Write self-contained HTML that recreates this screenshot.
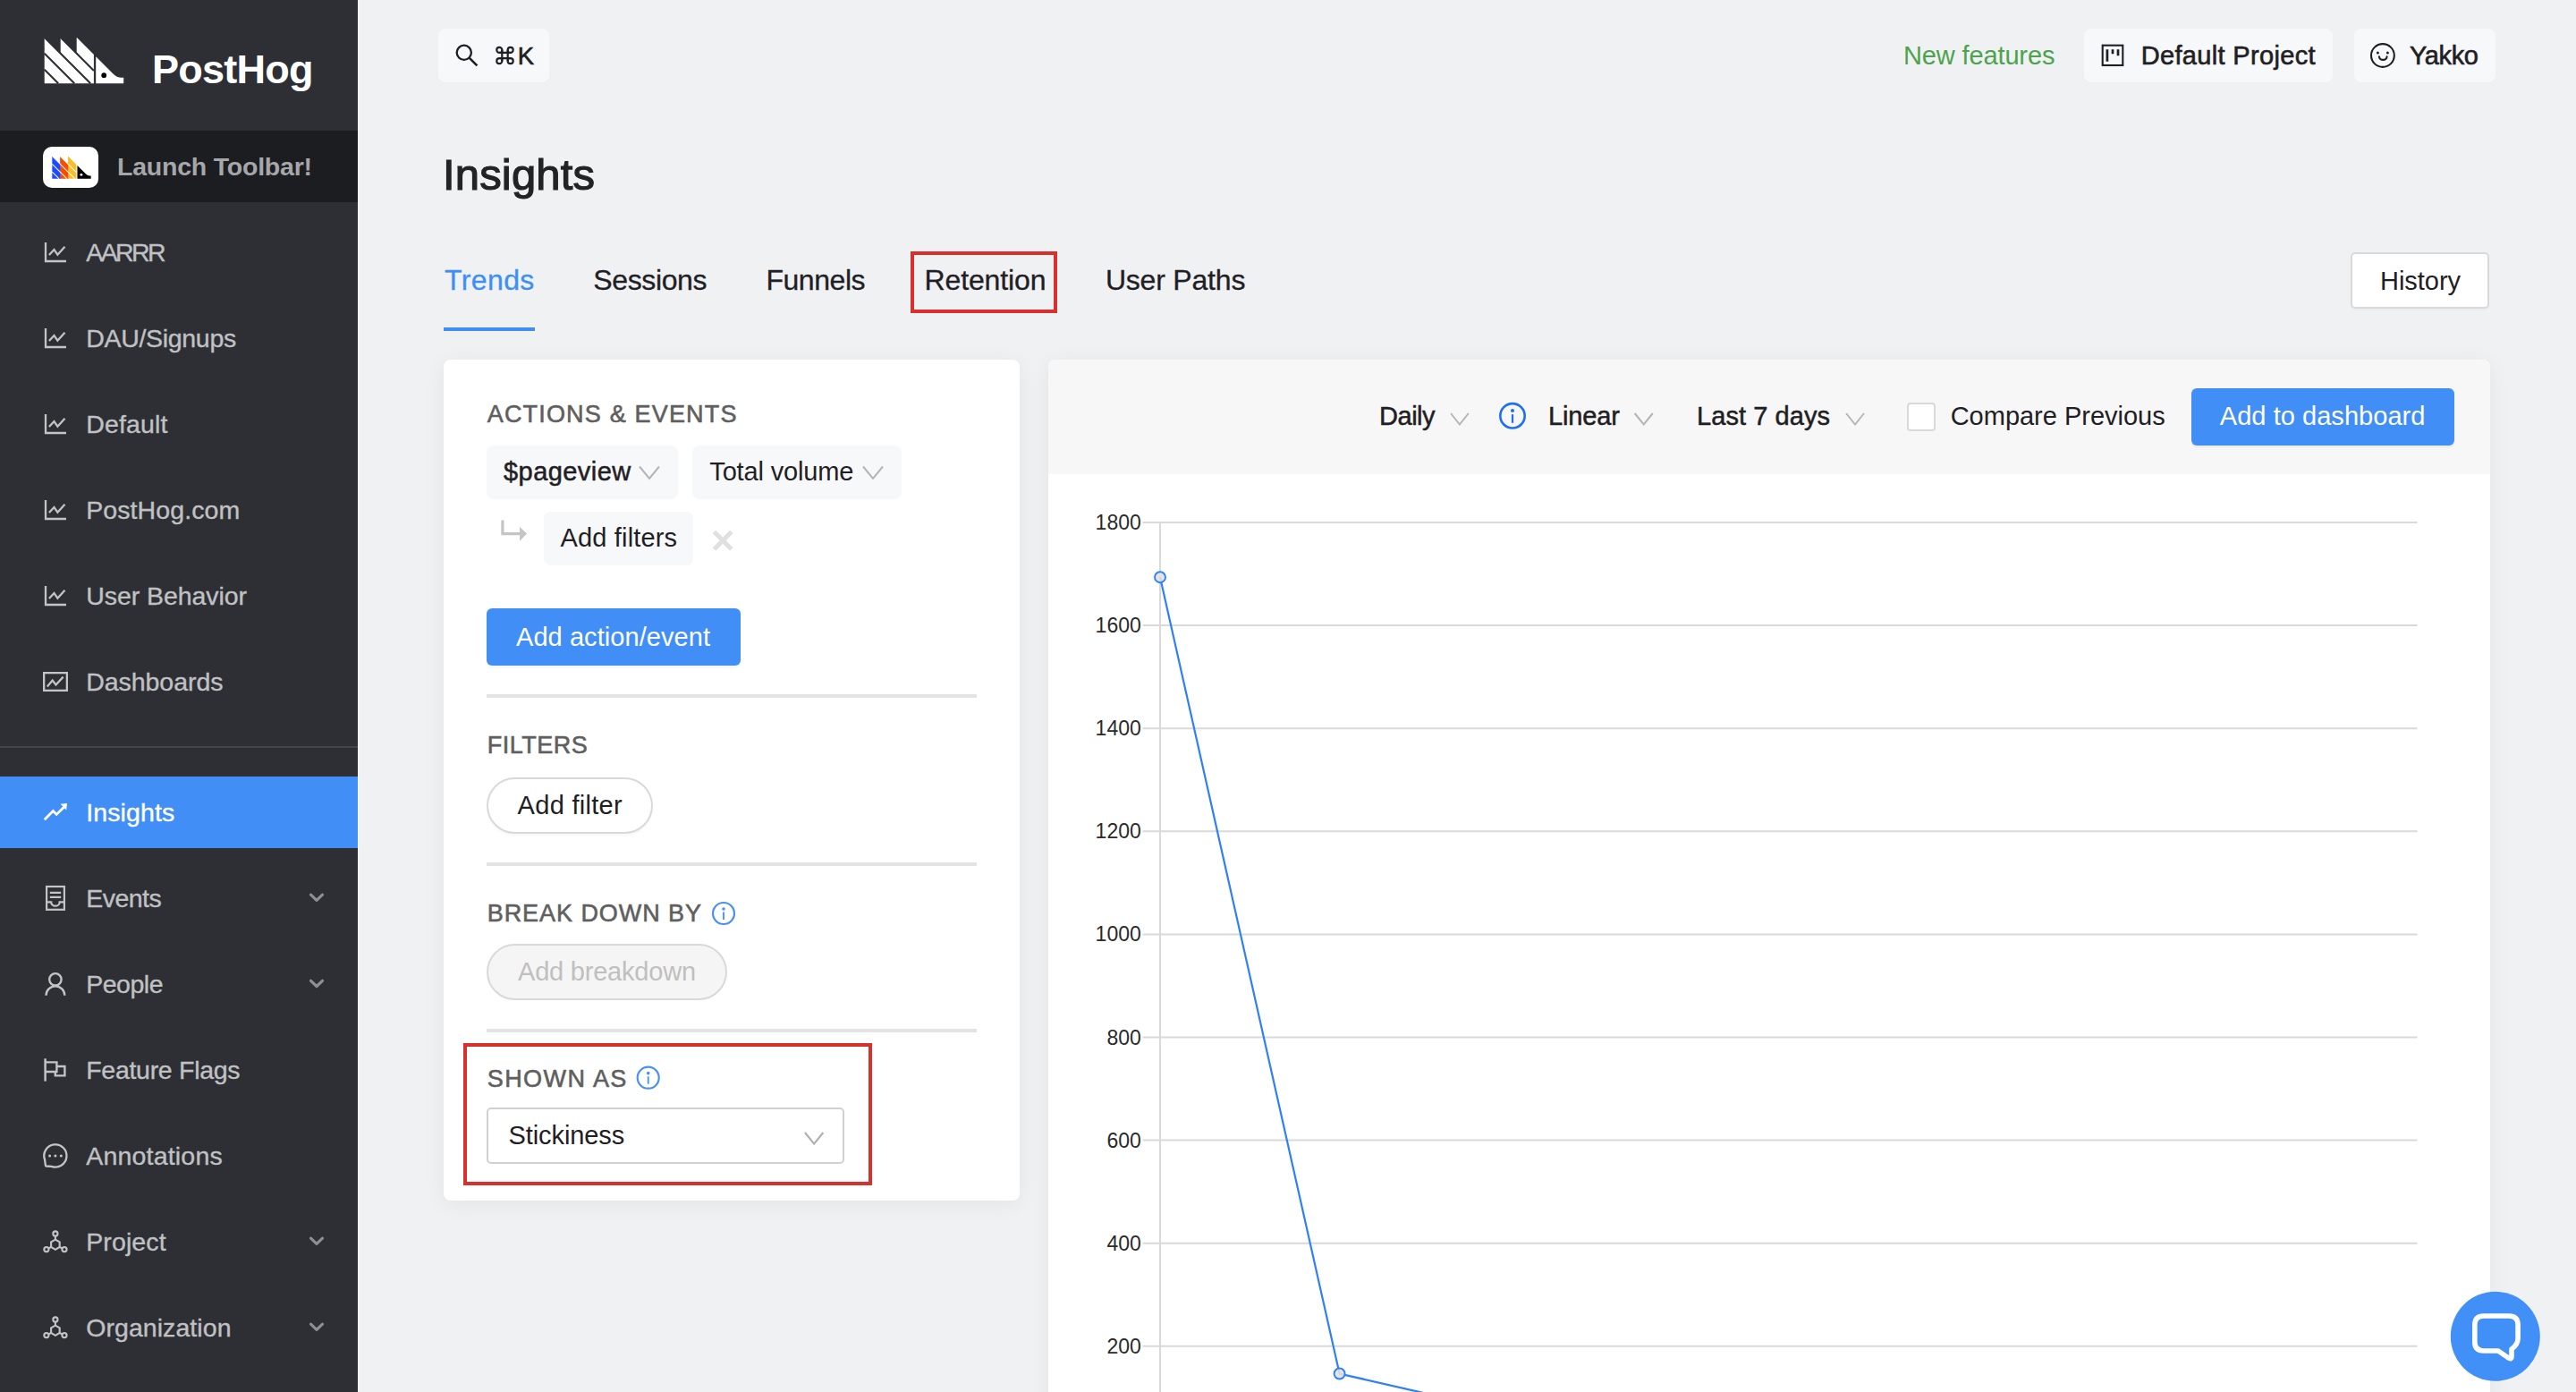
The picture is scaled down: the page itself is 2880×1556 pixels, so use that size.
<!DOCTYPE html>
<html><head><meta charset="utf-8"><style>
html,body{margin:0;padding:0;width:2880px;height:1556px;overflow:hidden;background:#f0f1f3;}
.t{position:absolute;white-space:nowrap;font-family:"Liberation Sans",sans-serif;}
svg{overflow:visible}
</style></head><body>
<div style="position:absolute;left:0.00px;top:0.00px;width:400.00px;height:1556.00px;background:#2d2f34;"></div>
<div style="position:absolute;left:400.00px;top:0.00px;width:1.00px;height:1556.00px;background:#f7f8fa;"></div>
<svg style="position:absolute;left:0px;top:0px;" width="400" height="240" viewBox="0 0 400 240"><g transform="translate(49.7,41.75) scale(1)"><polygon points="0,0 18,18 18,0 36,18 36,0 55.2,19.2 55.2,51.5 0,51.5" fill="#fff"/><line x1="0" y1="0" x2="51.5" y2="51.5" stroke="#2d2f34" stroke-width="2.1"/><line x1="18" y1="0" x2="55.2" y2="37.2" stroke="#2d2f34" stroke-width="2.1"/><line x1="0" y1="18" x2="33.5" y2="51.5" stroke="#2d2f34" stroke-width="2.1"/><line x1="0" y1="36" x2="15.5" y2="51.5" stroke="#2d2f34" stroke-width="2.1"/><line x1="0" y1="0" x2="18" y2="18" stroke="#2d2f34" stroke-width="0"/><path d="M57.5,21.5 L76.5,40.5 Q81,45 86,45 L88.5,45 L88.5,51.5 L57.5,51.5 Z" fill="#fff"/><circle cx="66.5" cy="42.4" r="2.85" fill="#000"/></g></svg>
<div class="t" style="left:170.00px;top:54.91px;font-size:45px;line-height:45px;color:#fff;font-weight:bold;letter-spacing:-0.749px;">PostHog</div>
<div style="position:absolute;left:0.00px;top:146.00px;width:400.00px;height:79.50px;background:#1c1d21;"></div>
<div style="position:absolute;left:48.00px;top:164.00px;width:62.00px;height:46.00px;background:#fff;border-radius:10px;"></div>
<svg style="position:absolute;left:0px;top:0px;" width="400" height="240" viewBox="0 0 400 240"><g transform="translate(58.3,174.5) scale(0.49)"><polygon points="36,0 55.2,19.2 55.2,51.5 36,51.5" fill="#f9bd2b"/><polygon points="18,0 36,18 36.6,18.6 36.6,51.5 18,51.5" fill="#f54e00"/><polygon points="0,0 18,18 18.6,18.6 18.6,51.5 0,51.5" fill="#1d4aff"/><line x1="0" y1="0" x2="51.5" y2="51.5" stroke="#fff" stroke-width="2.1"/><line x1="18" y1="0" x2="55.2" y2="37.2" stroke="#fff" stroke-width="2.1"/><line x1="0" y1="18" x2="33.5" y2="51.5" stroke="#fff" stroke-width="2.1"/><line x1="0" y1="36" x2="15.5" y2="51.5" stroke="#fff" stroke-width="2.1"/><line x1="0" y1="0" x2="18" y2="18" stroke="#fff" stroke-width="0"/><path d="M57.5,21.5 L76.5,40.5 Q81,45 86,45 L88.5,45 L88.5,51.5 L57.5,51.5 Z" fill="#000"/><circle cx="66.5" cy="42.4" r="2.85" fill="#fff"/></g></svg>
<div class="t" style="left:131.00px;top:172.37px;font-size:28.5px;line-height:28.5px;color:#a6a7aa;font-weight:bold;letter-spacing:-0.224px;">Launch Toolbar!</div>
<div style="position:absolute;left:0.00px;top:834.00px;width:400.00px;height:2.00px;background:#43454a;"></div>
<div style="position:absolute;left:0.00px;top:868.00px;width:400.00px;height:80.00px;background:#418ff6;"></div>
<div class="t" style="left:96.20px;top:268.07px;font-size:28.5px;line-height:28.5px;color:#c0c1c3;letter-spacing:-2.570px;-webkit-text-stroke:0.35px #c0c1c3;">AARRR</div>
<div class="t" style="left:96.20px;top:364.07px;font-size:28.5px;line-height:28.5px;color:#c0c1c3;letter-spacing:-0.309px;-webkit-text-stroke:0.35px #c0c1c3;">DAU/Signups</div>
<div class="t" style="left:96.20px;top:460.07px;font-size:28.5px;line-height:28.5px;color:#c0c1c3;letter-spacing:0.152px;-webkit-text-stroke:0.35px #c0c1c3;">Default</div>
<div class="t" style="left:96.20px;top:556.07px;font-size:28.5px;line-height:28.5px;color:#c0c1c3;letter-spacing:0.094px;-webkit-text-stroke:0.35px #c0c1c3;">PostHog.com</div>
<div class="t" style="left:96.20px;top:652.07px;font-size:28.5px;line-height:28.5px;color:#c0c1c3;letter-spacing:-0.056px;-webkit-text-stroke:0.35px #c0c1c3;">User Behavior</div>
<div class="t" style="left:96.20px;top:748.17px;font-size:28.5px;line-height:28.5px;color:#c0c1c3;letter-spacing:-0.041px;-webkit-text-stroke:0.35px #c0c1c3;">Dashboards</div>
<div class="t" style="left:96.20px;top:894.07px;font-size:28.5px;line-height:28.5px;color:#fff;letter-spacing:0.113px;-webkit-text-stroke:0.35px #fff;">Insights</div>
<div class="t" style="left:96.20px;top:989.77px;font-size:28.5px;line-height:28.5px;color:#c0c1c3;letter-spacing:-0.525px;-webkit-text-stroke:0.35px #c0c1c3;">Events</div>
<div class="t" style="left:96.20px;top:1085.87px;font-size:28.5px;line-height:28.5px;color:#c0c1c3;letter-spacing:-0.490px;-webkit-text-stroke:0.35px #c0c1c3;">People</div>
<div class="t" style="left:96.20px;top:1181.77px;font-size:28.5px;line-height:28.5px;color:#c0c1c3;letter-spacing:-0.285px;-webkit-text-stroke:0.35px #c0c1c3;">Feature Flags</div>
<div class="t" style="left:96.20px;top:1277.57px;font-size:28.5px;line-height:28.5px;color:#c0c1c3;letter-spacing:0.196px;-webkit-text-stroke:0.35px #c0c1c3;">Annotations</div>
<div class="t" style="left:96.20px;top:1373.67px;font-size:28.5px;line-height:28.5px;color:#c0c1c3;letter-spacing:0.118px;-webkit-text-stroke:0.35px #c0c1c3;">Project</div>
<div class="t" style="left:96.20px;top:1469.67px;font-size:28.5px;line-height:28.5px;color:#c0c1c3;letter-spacing:0.064px;-webkit-text-stroke:0.35px #c0c1c3;">Organization</div>
<svg style="position:absolute;left:0px;top:0px;" width="400" height="1556" viewBox="0 0 400 1556"><path d="M51,270.9 V292.0 H74" fill="none" stroke="#c3c4c6" stroke-width="2.3"/><path d="M54.9,285.0 L60.5,279.0 L64.4,284.7 L72.5,275.7" fill="none" stroke="#c3c4c6" stroke-width="2.3"/><path d="M51,366.9 V388.0 H74" fill="none" stroke="#c3c4c6" stroke-width="2.3"/><path d="M54.9,381.0 L60.5,375.0 L64.4,380.7 L72.5,371.7" fill="none" stroke="#c3c4c6" stroke-width="2.3"/><path d="M51,462.9 V484.0 H74" fill="none" stroke="#c3c4c6" stroke-width="2.3"/><path d="M54.9,477.0 L60.5,471.0 L64.4,476.7 L72.5,467.7" fill="none" stroke="#c3c4c6" stroke-width="2.3"/><path d="M51,558.9000000000001 V580.0 H74" fill="none" stroke="#c3c4c6" stroke-width="2.3"/><path d="M54.9,573.0 L60.5,567.0 L64.4,572.7 L72.5,563.7" fill="none" stroke="#c3c4c6" stroke-width="2.3"/><path d="M51,654.9000000000001 V676.0 H74" fill="none" stroke="#c3c4c6" stroke-width="2.3"/><path d="M54.9,669.0 L60.5,663.0 L64.4,668.7 L72.5,659.7" fill="none" stroke="#c3c4c6" stroke-width="2.3"/><rect x="49.15" y="752.15" width="25.7" height="19.7" fill="none" stroke="#c3c4c6" stroke-width="2.3"/><path d="M52.75,767.5 L58.7,760.6 L62.5,765.5 L70.7,756.6" fill="none" stroke="#c3c4c6" stroke-width="2.3"/><path d="M49.7,916.3 L59.4,906.6 L63.2,910.4 L71.5,902.2" fill="none" stroke="#fff" stroke-width="2.8"/><path d="M75,898 L67.6,898.8 L74.2,905.4 Z" fill="#fff"/><rect x="52.1" y="991" width="19.8" height="25.8" fill="none" stroke="#c3c4c6" stroke-width="2.2"/><path d="M55.8,997.8 H68.2 M55.8,1002.8 H68.2" stroke="#c3c4c6" stroke-width="2.2"/><path d="M52,1008.4 H57.2 A4.7,4.3 0 0 0 66.6,1008.4 H72" fill="none" stroke="#c3c4c6" stroke-width="2.2"/><circle cx="61.9" cy="1094.8" r="6.7" fill="none" stroke="#c3c4c6" stroke-width="2.4"/><path d="M51.5,1112.8 A10.4,10.4 0 0 1 72.3,1112.8" fill="none" stroke="#c3c4c6" stroke-width="2.4"/><path d="M50.6,1183.3 V1208.6" stroke="#c3c4c6" stroke-width="2.5"/><path d="M50.6,1187.4 H63.4 V1198 H50.6" fill="none" stroke="#c3c4c6" stroke-width="2.4"/><path d="M63.4,1192 H72.4 V1202.4 H61.8 V1198" fill="none" stroke="#c3c4c6" stroke-width="2.4"/><path d="M50.06,1296.3 A12.6,12.6 0 1 1 57.6,1303.8 L51.6,1303.5 Q50.9,1303.4 50.9,1302.7 Z" fill="none" stroke="#c3c4c6" stroke-width="2.3" stroke-linejoin="round"/><circle cx="55.6" cy="1292" r="1.55" fill="#c3c4c6"/><circle cx="61.9" cy="1292" r="1.55" fill="#c3c4c6"/><circle cx="68.3" cy="1292" r="1.55" fill="#c3c4c6"/><polygon points="61.90,1385.60 66.70,1388.40 66.70,1394.00 61.90,1396.80 57.10,1394.00 57.10,1388.40" fill="none" stroke="#c3c4c6" stroke-width="2.1"/><circle cx="61.9" cy="1379" r="2.6" fill="none" stroke="#c3c4c6" stroke-width="2.1"/><circle cx="51.9" cy="1396.6" r="2.6" fill="none" stroke="#c3c4c6" stroke-width="2.1"/><circle cx="72" cy="1396.6" r="2.6" fill="none" stroke="#c3c4c6" stroke-width="2.1"/><path d="M61.9,1385.6000000000001 V1381.6 M57.1,1394.0 L54.2,1395.4 M66.7,1394.0 L69.6,1395.4" stroke="#c3c4c6" stroke-width="2.1"/><polygon points="61.90,1481.60 66.70,1484.40 66.70,1490.00 61.90,1492.80 57.10,1490.00 57.10,1484.40" fill="none" stroke="#c3c4c6" stroke-width="2.1"/><circle cx="61.9" cy="1475" r="2.6" fill="none" stroke="#c3c4c6" stroke-width="2.1"/><circle cx="51.9" cy="1492.6" r="2.6" fill="none" stroke="#c3c4c6" stroke-width="2.1"/><circle cx="72" cy="1492.6" r="2.6" fill="none" stroke="#c3c4c6" stroke-width="2.1"/><path d="M61.9,1481.6000000000001 V1477.6 M57.1,1490.0 L54.2,1491.4 M66.7,1490.0 L69.6,1491.4" stroke="#c3c4c6" stroke-width="2.1"/><path d="M347.5,1000.1999999999999 L354,1006.4 L360.5,1000.1999999999999" fill="none" stroke="#8d8f92" stroke-width="3.2" stroke-linecap="round" stroke-linejoin="round"/><path d="M347.5,1096.3 L354,1102.5 L360.5,1096.3" fill="none" stroke="#8d8f92" stroke-width="3.2" stroke-linecap="round" stroke-linejoin="round"/><path d="M347.5,1384.1 L354,1390.3 L360.5,1384.1" fill="none" stroke="#8d8f92" stroke-width="3.2" stroke-linecap="round" stroke-linejoin="round"/><path d="M347.5,1480.1 L354,1486.3 L360.5,1480.1" fill="none" stroke="#8d8f92" stroke-width="3.2" stroke-linecap="round" stroke-linejoin="round"/></svg>
<div style="position:absolute;left:401.00px;top:0.00px;width:2479.00px;height:1556.00px;background:#f0f1f3;"></div>
<div style="position:absolute;left:490.00px;top:32.00px;width:123.60px;height:60.00px;background:#f7f8fa;border-radius:8px;"></div>
<svg style="position:absolute;left:0px;top:0px;" width="700" height="100" viewBox="0 0 700 100"><circle cx="518.8" cy="58.8" r="8.1" fill="none" stroke="#1d1f23" stroke-width="2.3"/><path d="M524.6,64.6 L533.4,73.4" stroke="#1d1f23" stroke-width="2.6"/><path d="M558.3,58.8 H570.7 M558.3,65.2 H570.7 M561.3,55.8 V68.2 M567.7,55.8 V68.2" fill="none" stroke="#1d1f23" stroke-width="2.2"/><path d="M561.3,58.8 H558.3 A3,3 0 1 1 561.3,55.8 Z" fill="none" stroke="#1d1f23" stroke-width="2.2"/><path d="M567.7,58.8 H570.7 A3,3 0 1 0 567.7,55.8 Z" fill="none" stroke="#1d1f23" stroke-width="2.2"/><path d="M561.3,65.2 H558.3 A3,3 0 1 0 561.3,68.2 Z" fill="none" stroke="#1d1f23" stroke-width="2.2"/><path d="M567.7,65.2 H570.7 A3,3 0 1 1 567.7,68.2 Z" fill="none" stroke="#1d1f23" stroke-width="2.2"/></svg>
<div class="t" style="left:578.80px;top:48.52px;font-size:27.5px;line-height:27.5px;color:#1d1f23;-webkit-text-stroke:0.6px #1d1f23;">K</div>
<div class="t" style="left:2128.00px;top:47.85px;font-size:29px;line-height:29px;color:#4da34d;letter-spacing:-0.133px;">New features</div>
<div style="position:absolute;left:2330.00px;top:32.00px;width:278.00px;height:59.60px;background:#f7f8fa;border-radius:8px;"></div>
<div style="position:absolute;left:2632.00px;top:32.00px;width:157.60px;height:59.60px;background:#f7f8fa;border-radius:8px;"></div>
<svg style="position:absolute;left:0px;top:0px;" width="2880" height="100" viewBox="0 0 2880 100"><rect x="2350.7" y="50.7" width="22.6" height="22.3" fill="none" stroke="#1d1f23" stroke-width="2.1"/><path d="M2355.9,55.2 V68.8 M2362,55.2 V60.2 M2368,55.2 V62.3" stroke="#1d1f23" stroke-width="2.7"/><circle cx="2663.9" cy="62" r="12.9" fill="none" stroke="#1d1f23" stroke-width="2.1"/><circle cx="2658.4" cy="59.1" r="1.5" fill="#1d1f23"/><circle cx="2669.4" cy="59.1" r="1.5" fill="#1d1f23"/><path d="M2659.9,63.3 A4.4,4.2 0 0 0 2668.6,63.3" fill="none" stroke="#1d1f23" stroke-width="2.1" stroke-linecap="round"/></svg>
<div class="t" style="left:2393.70px;top:47.85px;font-size:29px;line-height:29px;color:#1f2023;letter-spacing:0.342px;-webkit-text-stroke:0.6px #1f2023;">Default Project</div>
<div class="t" style="left:2694.00px;top:47.85px;font-size:29px;line-height:29px;color:#1f2023;letter-spacing:-0.361px;-webkit-text-stroke:0.6px #1f2023;">Yakko</div>
<div class="t" style="left:495.00px;top:171.12px;font-size:49px;line-height:49px;color:#232323;letter-spacing:0.164px;-webkit-text-stroke:1.2px #232323;">Insights</div>
<div class="t" style="left:497.00px;top:296.71px;font-size:32px;line-height:32px;color:#3d8ff5;letter-spacing:0.380px;-webkit-text-stroke:0.3px #3d8ff5;">Trends</div>
<div class="t" style="left:663.30px;top:296.71px;font-size:32px;line-height:32px;color:#1f2023;letter-spacing:-0.379px;-webkit-text-stroke:0.3px #1f2023;">Sessions</div>
<div class="t" style="left:856.40px;top:296.71px;font-size:32px;line-height:32px;color:#1f2023;letter-spacing:-0.443px;-webkit-text-stroke:0.3px #1f2023;">Funnels</div>
<div class="t" style="left:1033.50px;top:296.71px;font-size:32px;line-height:32px;color:#1f2023;letter-spacing:-0.124px;-webkit-text-stroke:0.3px #1f2023;">Retention</div>
<div class="t" style="left:1235.90px;top:296.71px;font-size:32px;line-height:32px;color:#1f2023;letter-spacing:-0.197px;-webkit-text-stroke:0.3px #1f2023;">User Paths</div>
<div style="position:absolute;left:496.00px;top:366.00px;width:102.00px;height:4.00px;background:#3d8ff5;"></div>
<div style="position:absolute;left:1018.00px;top:280.50px;width:164.00px;height:69.00px;border:4px solid #d6312c;box-sizing:border-box;"></div>
<div style="position:absolute;left:2628.20px;top:282.20px;width:155.30px;height:63.30px;background:#fff;border:2px solid #d9d9d9;border-radius:5px;box-sizing:border-box;box-shadow:0 2px 0 rgba(0,0,0,0.02);"></div>
<div class="t" style="left:2661.00px;top:299.75px;font-size:29px;line-height:29px;color:#1f2023;letter-spacing:-0.036px;">History</div>
<div style="position:absolute;left:495.80px;top:402.00px;width:644.40px;height:940.20px;background:#fff;border-radius:8px;box-shadow:0 4px 24px rgba(0,0,0,0.06);"></div>
<div class="t" style="left:544.70px;top:449.64px;font-size:27px;line-height:27px;color:#5f5f5f;letter-spacing:1.182px;-webkit-text-stroke:0.6px #5f5f5f;">ACTIONS &amp; EVENTS</div>
<div style="position:absolute;left:543.80px;top:498.40px;width:214.20px;height:59.20px;background:#f7f8fa;border-radius:8px;"></div>
<div style="position:absolute;left:774.00px;top:498.40px;width:234.00px;height:59.20px;background:#f7f8fa;border-radius:8px;"></div>
<div class="t" style="left:563.00px;top:513.45px;font-size:29px;line-height:29px;color:#1f2023;letter-spacing:0.446px;-webkit-text-stroke:0.5px #1f2023;">$pageview</div>
<div class="t" style="left:793.30px;top:513.45px;font-size:29px;line-height:29px;color:#1f2023;letter-spacing:-0.164px;">Total volume</div>
<svg style="position:absolute;left:0px;top:0px;" width="1200" height="1400" viewBox="0 0 1200 1400"><path d="M715,521.5 L726.0,535 L737,521.5" fill="none" stroke="#b5b5b5" stroke-width="2"/><path d="M965,521.5 L976.0,535 L987,521.5" fill="none" stroke="#b5b5b5" stroke-width="2"/><path d="M561.9,581.4 V596.6 H582" fill="none" stroke="#c5c5c5" stroke-width="3.2"/><path d="M581,589 L589.1,596.6 L581,604.8 Z" fill="#c5c5c5"/><path d="M798.5,594.6 L817.8,613.9 M817.8,594.6 L798.5,613.9" stroke="#e0e0e0" stroke-width="5"/></svg>
<div style="position:absolute;left:608.20px;top:572.00px;width:167.30px;height:59.50px;background:#f7f8fa;border-radius:8px;"></div>
<div class="t" style="left:626.60px;top:587.25px;font-size:29px;line-height:29px;color:#1f2023;letter-spacing:0.147px;">Add filters</div>
<div style="position:absolute;left:543.80px;top:680.30px;width:284.00px;height:63.70px;background:#418ff6;border-radius:6px;box-shadow:0 3px 0 rgba(0,0,0,0.03);"></div>
<div class="t" style="left:577.00px;top:698.05px;font-size:29px;line-height:29px;color:#fff;letter-spacing:0.063px;">Add action/event</div>
<div style="position:absolute;left:544.00px;top:776.00px;width:548.00px;height:4.00px;background:#e3e3e3;"></div>
<div class="t" style="left:544.70px;top:819.54px;font-size:27px;line-height:27px;color:#5f5f5f;letter-spacing:0.496px;-webkit-text-stroke:0.6px #5f5f5f;">FILTERS</div>
<div style="position:absolute;left:544.00px;top:868.50px;width:185.50px;height:63.00px;background:#fff;border:2px solid #d9d9d9;border-radius:32px;box-sizing:border-box;box-shadow:0 3px 0 rgba(0,0,0,0.02);"></div>
<div class="t" style="left:578.60px;top:886.25px;font-size:29px;line-height:29px;color:#1f2023;letter-spacing:0.285px;">Add filter</div>
<div style="position:absolute;left:544.00px;top:964.00px;width:548.00px;height:4.00px;background:#e3e3e3;"></div>
<div class="t" style="left:544.70px;top:1007.74px;font-size:27px;line-height:27px;color:#5f5f5f;letter-spacing:0.947px;-webkit-text-stroke:0.6px #5f5f5f;">BREAK DOWN BY</div>
<div style="position:absolute;left:544.00px;top:1054.50px;width:269.40px;height:63.20px;background:#f5f5f5;border:2px solid #d9d9d9;border-radius:32px;box-sizing:border-box;"></div>
<div class="t" style="left:579.00px;top:1071.65px;font-size:29px;line-height:29px;color:#bfbfbf;letter-spacing:-0.210px;">Add breakdown</div>
<div style="position:absolute;left:544.00px;top:1150.00px;width:548.00px;height:4.00px;background:#e3e3e3;"></div>
<div style="position:absolute;left:518.30px;top:1166.40px;width:457.20px;height:159.10px;border:4px solid #d6312c;box-sizing:border-box;"></div>
<div class="t" style="left:544.70px;top:1193.14px;font-size:27px;line-height:27px;color:#5f5f5f;letter-spacing:1.453px;-webkit-text-stroke:0.6px #5f5f5f;">SHOWN AS</div>
<div style="position:absolute;left:544.00px;top:1238.40px;width:399.80px;height:62.60px;background:#fff;border:2px solid #d0d0d0;border-radius:5px;box-sizing:border-box;"></div>
<div class="t" style="left:568.40px;top:1255.45px;font-size:29px;line-height:29px;color:#1f2023;letter-spacing:-0.070px;">Stickiness</div>
<svg style="position:absolute;left:0px;top:0px;" width="1200" height="1400" viewBox="0 0 1200 1400"><circle cx="809" cy="1021" r="12" fill="none" stroke="#4a8ff5" stroke-width="2.2"/><circle cx="809" cy="1015.96" r="1.7999999999999998" fill="#4a8ff5"/><path d="M809,1019.56 V1027.96" stroke="#4a8ff5" stroke-width="1.87"/><circle cx="724.7" cy="1204.7" r="12" fill="none" stroke="#4a8ff5" stroke-width="2.2"/><circle cx="724.7" cy="1199.66" r="1.7999999999999998" fill="#4a8ff5"/><path d="M724.7,1203.26 V1211.66" stroke="#4a8ff5" stroke-width="1.87"/><path d="M900,1266 L910.15,1278.6 L920.3,1266" fill="none" stroke="#b0b0b0" stroke-width="2.2"/></svg>
<div style="position:absolute;left:1171.60px;top:402.00px;width:1612.00px;height:1200.00px;background:#fff;border-radius:8px;box-shadow:0 4px 24px rgba(0,0,0,0.06);"></div>
<div style="position:absolute;left:1171.60px;top:402.00px;width:1612.00px;height:127.60px;background:#f7f7f7;border-radius:8px 8px 0 0;"></div>
<div class="t" style="left:1542.00px;top:451.45px;font-size:29px;line-height:29px;color:#1f2023;letter-spacing:-0.467px;-webkit-text-stroke:0.5px #1f2023;">Daily</div>
<div class="t" style="left:1731.00px;top:451.45px;font-size:29px;line-height:29px;color:#1f2023;letter-spacing:-0.124px;-webkit-text-stroke:0.5px #1f2023;">Linear</div>
<div class="t" style="left:1897.00px;top:451.45px;font-size:29px;line-height:29px;color:#1f2023;letter-spacing:0.069px;-webkit-text-stroke:0.5px #1f2023;">Last 7 days</div>
<div style="position:absolute;left:2132.00px;top:450.00px;width:31.60px;height:31.50px;background:#fff;border:2px solid #d9d9d9;border-radius:4px;box-sizing:border-box;"></div>
<div class="t" style="left:2180.70px;top:451.45px;font-size:29px;line-height:29px;color:#1f2023;letter-spacing:-0.010px;">Compare Previous</div>
<div style="position:absolute;left:2450.00px;top:434.00px;width:294.00px;height:63.80px;background:#418ff6;border-radius:6px;box-shadow:0 3px 0 rgba(0,0,0,0.03);"></div>
<div class="t" style="left:2481.80px;top:451.45px;font-size:29px;line-height:29px;color:#fff;letter-spacing:0.043px;">Add to dashboard</div>
<svg style="position:absolute;left:0px;top:0px;" width="2880" height="600" viewBox="0 0 2880 600"><path d="M1622,462 L1631.9,474.5 L1641.8,462" fill="none" stroke="#b5b5b5" stroke-width="2"/><path d="M1827.6,462 L1837.6999999999998,474.5 L1847.8,462" fill="none" stroke="#b5b5b5" stroke-width="2"/><path d="M2064,462 L2074.0,474.5 L2084,462" fill="none" stroke="#b5b5b5" stroke-width="2"/><circle cx="1691" cy="464.8" r="13.7" fill="none" stroke="#1f6ff5" stroke-width="2.6"/><circle cx="1691" cy="459.046" r="2.0549999999999997" fill="#1f6ff5"/><path d="M1691,463.156 V472.74600000000004" stroke="#1f6ff5" stroke-width="2.21"/></svg>
<svg style="position:absolute;left:0px;top:0px;" width="2880" height="1556" viewBox="0 0 2880 1556"><path d="M1277.6,584.0 H2702.6" stroke="#d9d9d9" stroke-width="2"/><path d="M1277.6,699.1 H2702.6" stroke="#d9d9d9" stroke-width="2"/><path d="M1277.6,814.2 H2702.6" stroke="#d9d9d9" stroke-width="2"/><path d="M1277.6,929.3 H2702.6" stroke="#d9d9d9" stroke-width="2"/><path d="M1277.6,1044.4 H2702.6" stroke="#d9d9d9" stroke-width="2"/><path d="M1277.6,1159.5 H2702.6" stroke="#d9d9d9" stroke-width="2"/><path d="M1277.6,1274.6 H2702.6" stroke="#d9d9d9" stroke-width="2"/><path d="M1277.6,1389.7 H2702.6" stroke="#d9d9d9" stroke-width="2"/><path d="M1277.6,1504.8 H2702.6" stroke="#d9d9d9" stroke-width="2"/><path d="M1297,584 V1556" stroke="#d9d9d9" stroke-width="2"/><polyline points="1297,645.2 1497.6,1535.5 1698.2,1581.4" fill="none" stroke="#2f7ff7" stroke-width="2.2"/><circle cx="1297" cy="645.2" r="6" fill="#e2e2e2" fill-opacity="0.9" stroke="#2f7ff7" stroke-width="1.9"/><circle cx="1497.6" cy="1535.5" r="6" fill="#e2e2e2" fill-opacity="0.9" stroke="#2f7ff7" stroke-width="1.9"/></svg>
<div class="t" style="left:1224.62px;top:573.03px;font-size:23px;line-height:23px;color:#2a2a2a;">1800</div>
<div class="t" style="left:1224.62px;top:688.13px;font-size:23px;line-height:23px;color:#2a2a2a;">1600</div>
<div class="t" style="left:1224.62px;top:803.23px;font-size:23px;line-height:23px;color:#2a2a2a;">1400</div>
<div class="t" style="left:1224.62px;top:918.33px;font-size:23px;line-height:23px;color:#2a2a2a;">1200</div>
<div class="t" style="left:1224.62px;top:1033.43px;font-size:23px;line-height:23px;color:#2a2a2a;">1000</div>
<div class="t" style="left:1237.44px;top:1148.53px;font-size:23px;line-height:23px;color:#2a2a2a;">800</div>
<div class="t" style="left:1237.44px;top:1263.63px;font-size:23px;line-height:23px;color:#2a2a2a;">600</div>
<div class="t" style="left:1237.44px;top:1378.73px;font-size:23px;line-height:23px;color:#2a2a2a;">400</div>
<div class="t" style="left:1237.44px;top:1493.83px;font-size:23px;line-height:23px;color:#2a2a2a;">200</div>
<svg style="position:absolute;left:0px;top:0px;" width="2880" height="1556" viewBox="0 0 2880 1556"><circle cx="2789.8" cy="1493.8" r="50" fill="#4190f7"/><path d="M2777,1471 H2805 Q2815.1,1471 2815.1,1481 V1496 Q2815.1,1503 2808,1508 V1516.5 Q2808,1520 2805,1518.2 L2793,1510 H2777 Q2766.8,1510 2766.8,1500 V1481 Q2766.8,1471 2777,1471 Z" fill="none" stroke="#fff" stroke-width="5.6" stroke-linejoin="round"/></svg>
</body></html>
